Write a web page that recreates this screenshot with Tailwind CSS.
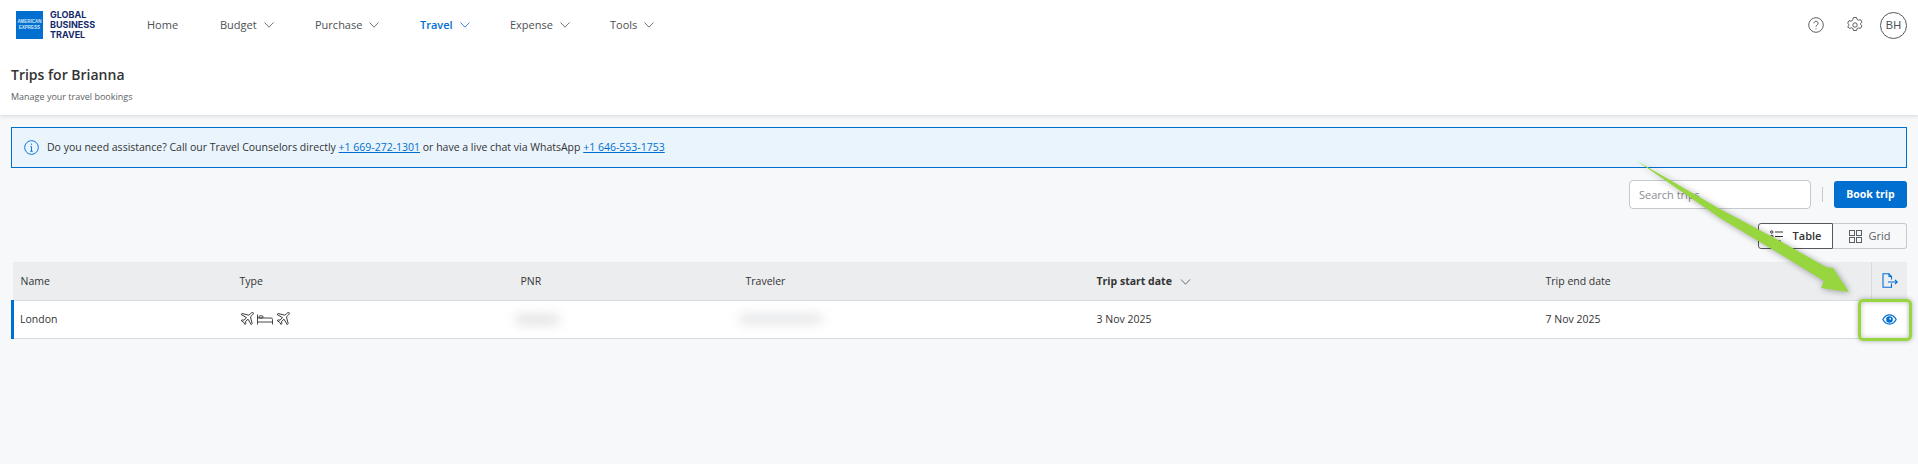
<!DOCTYPE html>
<html lang="en">
<head>
  <meta charset="UTF-8" />
  <meta name="viewport" content="width=device-width, initial-scale=1" />
  <title>Trips for Brianna</title>
  <script src="https://cdn.jsdelivr.net/npm/@tailwindcss/browser@4"></script>
</head>
<body class="relative h-[464px] overflow-hidden bg-[#f7f8f9] text-[#333] font-['Open_Sans',sans-serif]">

  <!-- Header -->
  <header class="h-[115px] bg-white shadow-[0_1px_4px_rgba(0,0,0,0.14)]">
    <div class="flex h-[50px] items-center justify-between pl-4 pr-[11px]">
      <div class="flex items-center">
        <div class="flex h-[28px] w-[27px] flex-col items-center justify-center bg-[#006fcf] text-[4.5px] leading-[6px] font-bold text-[#cfe6fa] font-['Liberation_Sans',sans-serif]">
          <span>AMERICAN</span>
          <span>EXPRESS</span>
        </div>
        <div class="ml-[7px] w-[50px] text-[9px] leading-[10px] font-bold text-[#14296b] font-['Inter',sans-serif]">GLOBAL BUSINESS TRAVEL</div>
        <nav class="ml-[47px] flex items-center text-[11px] text-[#4d4f53]">
          <a href="#" class="w-[73px]">Home</a>
          <a href="#" class="flex w-[95px] items-center gap-[7px]">Budget
            <svg class="h-[6px] w-[10px]" viewBox="0 0 10 6" fill="none" stroke="currentColor" stroke-width="0.8"><path d="M0.5 0.5 5 5.2 9.5 0.5" /></svg>
          </a>
          <a href="#" class="flex w-[105px] items-center gap-[7px]">Purchase
            <svg class="h-[6px] w-[10px]" viewBox="0 0 10 6" fill="none" stroke="currentColor" stroke-width="0.8"><path d="M0.5 0.5 5 5.2 9.5 0.5" /></svg>
          </a>
          <a href="#" class="flex w-[90px] items-center gap-[7px] font-semibold text-[#006fcf]">Travel
            <svg class="h-[6px] w-[10px]" viewBox="0 0 10 6" fill="none" stroke="currentColor" stroke-width="0.8"><path d="M0.5 0.5 5 5.2 9.5 0.5" /></svg>
          </a>
          <a href="#" class="flex w-[100px] items-center gap-[7px]">Expense
            <svg class="h-[6px] w-[10px]" viewBox="0 0 10 6" fill="none" stroke="currentColor" stroke-width="0.8"><path d="M0.5 0.5 5 5.2 9.5 0.5" /></svg>
          </a>
          <a href="#" class="flex items-center gap-[7px]">Tools
            <svg class="h-[6px] w-[10px]" viewBox="0 0 10 6" fill="none" stroke="currentColor" stroke-width="0.8"><path d="M0.5 0.5 5 5.2 9.5 0.5" /></svg>
          </a>
        </nav>
      </div>
      <div class="flex items-center text-[#4d4f53]">
        <svg class="h-4 w-4" viewBox="0 0 16 16" fill="none" stroke="currentColor" stroke-width="0.9">
          <circle cx="8" cy="8" r="7.3" />
          <path d="M5.900 6.300a2.100 2.100 0 1 1 3.300 1.700c-.8.5-1.200.9-1.200 1.800" />
          <path d="M8 11.200v1" />
        </svg>
        <svg class="ml-[23px] h-4 w-4" viewBox="0 0 16 16" fill="none" stroke="currentColor" stroke-width="0.9">
          <path d="M6.500.5h3l.5 1.900 1.500.8 1.900-.6 1.500 2.600-1.400 1.300v1l1.400 1.300-1.500 2.600-1.900-.6-1.500.8-.5 1.900h-3l-.5-1.900-1.500-.8-1.900.6L.6 9.800 2 8.500v-1L.6 6.200l1.500-2.600 1.900.6 1.500-.8z" stroke-linejoin="round" />
          <circle cx="8" cy="8" r="2.200" />
        </svg>
        <div class="ml-[17px] flex h-[27px] w-[27px] items-center justify-center rounded-full border border-[#55585c] text-[11px] font-['Liberation_Sans',sans-serif]">BH</div>
      </div>
    </div>
    <div class="mt-[14px] pl-[11px]">
      <h1 class="text-[14px] leading-[22px] font-semibold">Trips for Brianna</h1>
      <p class="mt-[4px] text-[9px] leading-[14px] text-[#5c5f63]">Manage your travel bookings</p>
    </div>
  </header>

  <main class="px-[11px]">
    <!-- Assistance notice -->
    <div class="mt-3 flex h-[41px] items-center border border-[#006fcf] bg-[#e9f4fd] pl-3 text-[10.5px] text-[#333]">
      <svg class="h-[15px] w-[15px] text-[#006fcf]" viewBox="0 0 16 16" fill="none" stroke="currentColor" stroke-width="1">
        <circle cx="8" cy="8" r="7.3" />
        <path d="M8 7v5M6.600 12h2.800M6.800 7H8" />
        <circle cx="8" cy="4.400" r="0.7" fill="currentColor" stroke="none" />
      </svg>
      <p class="ml-2">Do you need assistance? Call our Travel Counselors directly <a href="#" class="text-[#006fcf] underline">+1 669-272-1301</a> or have a live chat via WhatsApp <a href="#" class="text-[#006fcf] underline">+1 646-553-1753</a></p>
    </div>

    <!-- Search and book -->
    <div class="mt-3 flex items-center justify-end">
      <input type="text" placeholder="Search trips" class="h-[29px] w-[182px] rounded border border-[#c8c9cc] bg-white px-[9px] text-[11px] placeholder:text-[#8a8d91]" />
      <div class="mx-[11px] h-[15px] w-px bg-[#c8c9cc]"></div>
      <button class="h-[27px] w-[73px] rounded-[3px] bg-[#006fcf] text-[10.5px] font-bold text-white">Book trip</button>
    </div>

    <!-- View toggle -->
    <div class="mt-[14px] flex justify-end">
      <button class="flex h-[26px] w-[75px] items-center justify-center gap-[10px] rounded-l-[3px] border border-[#55585c] bg-white text-[11px] font-semibold">
        <svg class="h-[13px] w-[13px]" viewBox="0 0 13 13" fill="none" stroke="currentColor" stroke-width="1">
          <circle cx="1.800" cy="2" r="1.200" /><circle cx="1.800" cy="6.500" r="1.200" /><circle cx="1.800" cy="11" r="1.200" />
          <path d="M5 2h8M5 6.500h8M5 11h6" />
        </svg>
        Table
      </button>
      <button class="flex h-[26px] w-[74px] items-center justify-center gap-[7px] rounded-r-[3px] border border-l-0 border-[#c8c9cc] text-[11px] text-[#5c5f63]">
        <svg class="h-[13px] w-[13px]" viewBox="0 0 13 13" fill="none" stroke="currentColor" stroke-width="1">
          <rect x="0.5" y="0.5" width="5" height="5" /><rect x="7.500" y="0.5" width="5" height="5" />
          <rect x="0.5" y="7.500" width="5" height="5" /><rect x="7.500" y="7.500" width="5" height="5" />
        </svg>
        Grid
      </button>
    </div>

    <!-- Trips table -->
    <table class="mt-[13px] w-full table-fixed text-left text-[10.5px]">
      <thead class="bg-[#ecedef]">
        <tr class="h-[38px] border-b border-[#d9dadc]">
          <th class="w-[219px] pl-[8px] pt-[2px] font-normal">Name</th>
          <th class="w-[280px] pl-[8px] pt-[2px] font-normal">Type</th>
          <th class="w-[225px] pl-[9px] pt-[2px] font-normal">PNR</th>
          <th class="w-[351px] pl-[9px] pt-[2px] font-normal">Traveler</th>
          <th class="w-[449px] pl-[9px] pt-[2px] font-bold">
            <span class="flex items-center gap-2">Trip start date
              <svg class="h-[6px] w-[11px]" viewBox="0 0 10 6" fill="none" stroke="currentColor" stroke-width="0.7"><path d="M0.5 0.5 5 5.2 9.500 0.5" /></svg>
            </span>
          </th>
          <th class="w-[335px] pl-[9px] pt-[2px] font-normal">Trip end date</th>
          <th class="border-l border-[#d9dadc]">
            <svg class="mx-auto h-[15px] w-[16px] text-[#006fcf]" viewBox="0 0 16 15" fill="none" stroke="currentColor" stroke-width="1.100">
              <path d="M9.500 10.500v3.700H1V.8h6l2.500 2.600v3" />
              <path d="M7 .8v2.700h2.500" />
              <path d="M6 9h9.300M13 6.800 15.300 9 13 11.200" />
            </svg>
          </th>
        </tr>
      </thead>
      <tbody class="bg-white">
        <tr class="h-[38px] border-b border-[#d9dadc]">
          <td class="border-l-[3px] border-[#006fcf] pl-[6px] pt-[2px]">London</td>
          <td class="pl-[8px]">
            <div class="flex items-center gap-[3px] text-[#333]">
              <svg class="h-[14px] w-[14px]" viewBox="0 0 13 13" fill="none" stroke="currentColor" stroke-width="0.9" stroke-linejoin="round">
                <path d="M12.300.7c-.7-.4-1.700 0-2.300.6L8.200 3 2 1.400 1 2.300l5 2.900-2.200 2.400-1.900-.3-.8.7 2.200 1.400 1.400 2.200.7-.8-.3-1.900L7.500 6.700l2.900 5 .9-1L9.700 4.500 11.500 2.800c.6-.6 1.100-1.500.8-2.100z" />
              </svg>
              <svg class="h-[11px] w-[16px]" viewBox="0 0 16 11" fill="none" stroke="currentColor" stroke-width="0.9">
                <path d="M.5.5v10M.5 8h15v2.500M15.500 8V5.500A1.500 1.500 0 0 0 14 4H.5" />
                <rect x="2" y="1.800" width="4" height="2.200" rx="1" />
              </svg>
              <svg class="h-[14px] w-[14px]" viewBox="0 0 13 13" fill="none" stroke="currentColor" stroke-width="0.9" stroke-linejoin="round">
                <path d="M12.300.7c-.7-.4-1.700 0-2.300.6L8.200 3 2 1.400 1 2.300l5 2.900-2.200 2.400-1.900-.3-.8.7 2.200 1.400 1.400 2.200.7-.8-.3-1.900L7.500 6.700l2.900 5 .9-1L9.700 4.500 11.500 2.800c.6-.6 1.100-1.500.8-2.100z" />
              </svg>
            </div>
          </td>
          <td class="pl-[3px]"><div class="h-[9px] w-[45px] rounded-full bg-[#dcdddf] blur-[6px]"></div></td>
          <td class="pl-[2px]"><div class="h-[8px] w-[84px] rounded-full bg-[#dedfe1] blur-[6px]"></div></td>
          <td class="pl-[9px] pt-[2px]">3 Nov 2025</td>
          <td class="pl-[9px] pt-[2px]">7 Nov 2025</td>
          <td>
            <svg class="mx-auto h-[11px] w-[15px] text-[#006fcf]" viewBox="0 0 16 12" fill="none" stroke="currentColor" stroke-width="1.300">
              <path d="M.7 6C2.500 2.800 5 1 8 1s5.500 1.800 7.300 5c-1.800 3.200-4.300 5-7.300 5S2.500 9.200.7 6z" />
              <circle cx="8" cy="6" r="3.600" fill="currentColor" stroke="none" />
              <circle cx="8.800" cy="5.200" r="1" fill="#fff" stroke="none" />
            </svg>
          </td>
        </tr>
      </tbody>
    </table>
  </main>

  <!-- Annotation drawn over the screenshot -->
  <div class="pointer-events-none absolute left-[1858px] top-[299px] h-[42px] w-[54px] rounded-[5px] border-[3px] border-[#97d63f] shadow-[0_0_5px_rgba(0,0,0,0.3),inset_0_0_5px_rgba(0,0,0,0.25)]"></div>
  <svg class="pointer-events-none absolute inset-0 h-[464px] w-[1918px] drop-shadow-[1px_1px_3px_rgba(0,0,0,0.35)]" viewBox="0 0 1918 464">
    <path d="M1637 161 1720 209 1780 241 1826 267 1833 268 1849 292 1821 288 1824 281 1780 254 1720 218z" fill="#97d63f" />
  </svg>
</body>
</html>
